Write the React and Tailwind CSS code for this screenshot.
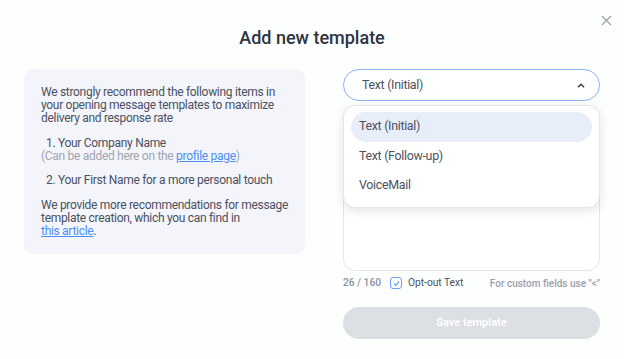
import React from 'react';

const items = ['Text (Initial)', 'Text (Follow-up)', 'VoiceMail'];

const App = () => {
    return (
        <div
            className="relative w-full h-[359px] bg-[#fdfefe] text-[#4b5160]"
            style={{ fontFamily: 'Roboto, "Open Sans", sans-serif' }}
        >
            {/* close */}
            <button className="absolute right-[12px] top-[15px] w-[11px] h-[11px] text-[#9aa0aa]">
                <svg viewBox="0 0 11 11" className="w-[11px] h-[11px]">
                    <path d="M1 1L10 10M10 1L1 10" stroke="currentColor" strokeWidth="1.2" fill="none" />
                </svg>
            </button>

            <h1 className="pt-[27px] text-center text-[18px] leading-[22px] font-medium text-[#2e3441]">
                Add new template
            </h1>

            <div className="flex gap-[38px] px-[24px] pt-[20px]">
                {/* left info */}
                <div className="w-[281px] h-[185px] shrink-0 rounded-[9px] bg-[#f3f5fb] pl-[17px] pr-[10px] pt-[17px] text-[12px] leading-[13px] tracking-[-0.3px]">
                    <p>
                        We strongly recommend the following items in your opening message templates to
                        maximize delivery and response rate
                    </p>
                    <p className="mt-[12px] pl-[5px]">1. Your Company Name</p>
                    <p className="text-[#a0a5ae]">
                        (Can be added here on the{' '}
                        <a className="text-[#4c8df6] underline">profile page</a>)
                    </p>
                    <p className="mt-[11px] pl-[5px]">2. Your First Name for a more personal touch</p>
                    <p className="mt-[12px]">
                        We provide more recommendations for message template creation, which you can
                        find in <br />
                        <a className="text-[#4c8df6] underline">this article</a>.
                    </p>
                </div>

                {/* right form */}
                <div className="w-[257px] shrink-0">
                    <div className="relative">
                        <div className="h-[32px] rounded-full border border-[#8db1f3] bg-white flex items-center justify-between pl-[18px] pr-[14px]">
                            <span className="text-[12.4px] tracking-[-0.3px] text-[#4b5160]">Text (Initial)</span>
                            <svg viewBox="0 0 8 5" className="w-[8px] h-[5px]">
                                <path d="M1 4.2L4 1.2L7 4.2" stroke="#3a3f4b" strokeWidth="1.5" fill="none" />
                            </svg>
                        </div>

                        <div className="mt-[8px] h-[162px] rounded-[12px] border border-[#e3e5ea] bg-white" />

                        <div className="absolute left-0 right-0 top-[36px] rounded-[12px] border border-[#e3e5ea] bg-white px-[7px] py-[6px] shadow-[0_3px_10px_rgba(30,40,60,0.12)]">
                            {items.map((item, i) => (
                                <div
                                    key={item}
                                    className={
                                        'h-[29.5px] flex items-center pl-[8px] rounded-full text-[12.4px] tracking-[-0.3px] text-[#4b5160] ' +
                                        (i === 0 ? 'bg-[#e8eef9]' : '')
                                    }
                                >
                                    {item}
                                </div>
                            ))}
                        </div>
                    </div>

                    <div className="mt-[5px] flex items-center h-[14px]">
                        <span className="text-[10.2px] font-medium text-[#8a909b]">26 / 160</span>
                        <span className="ml-[9px] w-[12px] h-[12px] rounded-[3px] border border-[#6e9ef3] flex items-center justify-center">
                            <svg viewBox="0 0 8 8" className="w-[7px] h-[7px]">
                                <path d="M1.2 4.2L3.2 6.1L6.8 1.8" stroke="#4c8df6" strokeWidth="1.2" fill="none" />
                            </svg>
                        </span>
                        <span className="ml-[6px] text-[10.2px] text-[#4b5160]">Opt-out Text</span>
                        <span className="ml-auto text-[10px] font-medium text-[#9aa0ab]">For custom fields use "&lt;"</span>
                    </div>

                    <button className="mt-[17px] w-full h-[32px] rounded-full bg-[#dcdfe4] text-white text-[11px] font-semibold">
                        Save template
                    </button>
                </div>
            </div>
        </div>
    );
};

export default App;
